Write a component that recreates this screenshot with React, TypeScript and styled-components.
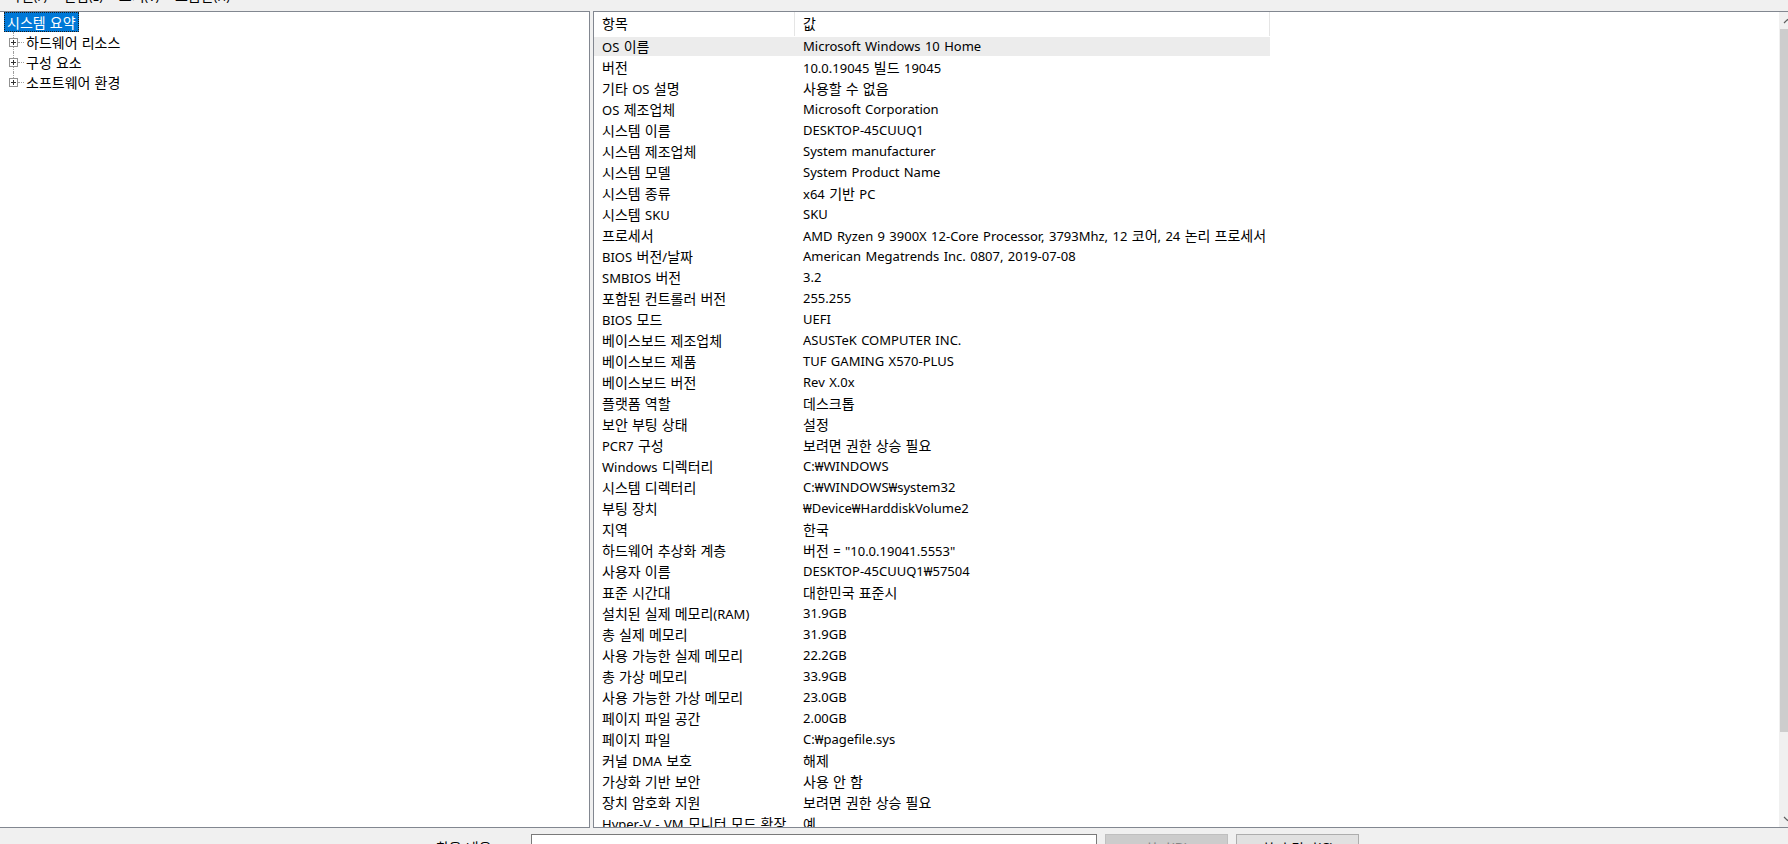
import React from 'react';
import styled, { createGlobalStyle } from 'styled-components';

const GlobalStyle = createGlobalStyle`
  html, body {
    margin: 0;
    padding: 0;
    overflow: hidden;
    background: #f0f0f0;
  }
  * {
    box-sizing: border-box;
  }
`;

const uiFont = `"Noto Sans", "Noto Sans CJK KR", sans-serif`;

const Viewport = styled.div`
  width: 1788px;
  height: 844px;
  overflow: hidden;
  background: #f0f0f0;
  font-family: ${uiFont};
  font-size: 13px;
  word-spacing: 1px;
  color: #000;
`;

// the window is a little wider than the screen, so the scrollbar is clipped
const Window = styled.div`
  width: 1796px;
  height: 844px;
  display: flex;
  flex-direction: column;
`;

// Hangul runs are set a touch larger than the Latin text around them
const Hangul = styled.span`
  font-family: "Noto Sans CJK KR", sans-serif;
  font-size: 14px;
`;

const hangulRun = /([\u3131-\u318E\uAC00-\uD7A3]+(?:\s+[\u3131-\u318E\uAC00-\uD7A3]+)*)/;

const T = ({ children }: { children: string }) => (
  <>
    {children.split(hangulRun).map((part, i) =>
      i % 2 === 1 ? <Hangul key={i}>{part}</Hangul> : part
    )}
  </>
);

const MenuBar = styled.div`
  height: 11px;
  flex-shrink: 0;
  display: flex;
  overflow: hidden;
`;

const MenuItem = styled.span`
  padding: 0 8px;
  margin-top: -12px;
  line-height: 15px;
  font-size: 12px;
  white-space: nowrap;
`;

const Main = styled.div`
  flex: 1;
  min-height: 0;
  display: flex;
  gap: 3px;
`;

const TreePane = styled.div`
  width: 590px;
  flex-shrink: 0;
  background: #fff;
  border: 1px solid #828790;
  border-left: none;
`;

const TreeRow = styled.div`
  height: 20px;
  display: flex;
  align-items: center;
`;

const RootLabel = styled.span`
  margin-left: 4px;
  height: 20px;
  padding: 0 2px;
  display: flex;
  align-items: center;
  background: #0078d7;
  color: #fff;
  border: 1px dotted #1c1c1c;
  white-space: nowrap;
`;

const Gutter = styled.div<{ $last?: boolean }>`
  position: relative;
  width: 24px;
  height: 20px;
  flex-shrink: 0;
  display: flex;
  align-items: center;
  padding-left: 9px;

  &::before {
    content: '';
    position: absolute;
    left: 13px;
    top: 0;
    height: ${p => (p.$last ? '10px' : '20px')};
    border-left: 1px dotted #a0a0a0;
  }

  &::after {
    content: '';
    position: absolute;
    left: 18px;
    right: 0;
    top: 10px;
    border-top: 1px dotted #a0a0a0;
  }

  svg {
    position: relative;
    z-index: 1;
    display: block;
  }
`;

const NodeLabel = styled.span`
  padding: 0 2px 1px;
  white-space: nowrap;
`;

const ListPane = styled.div`
  flex: 1;
  min-width: 0;
  display: flex;
  background: #fff;
  border: 1px solid #828790;
  border-right: none;
`;

const ListArea = styled.div`
  flex: 1;
  min-width: 0;
  overflow: hidden;
`;

const HeaderRow = styled.div`
  display: grid;
  grid-template-columns: 201px 475px;
  height: 24px;
  align-items: center;
`;

const HeaderCell = styled.div`
  height: 24px;
  display: flex;
  align-items: center;
  padding: 0 0 2px 8px;
  border-right: 1px solid #e5e5e5;
  white-space: nowrap;
`;

const DataRow = styled.div<{ $selected?: boolean }>`
  display: grid;
  grid-template-columns: 201px 475px;
  height: 21px;
  width: 676px;
  align-items: center;
  background: ${p =>
    p.$selected ? 'linear-gradient(#fff 0 1px, #ececec 1px 20px, #fff 20px)' : 'transparent'};
`;

const Cell = styled.div`
  padding: 0 0 1px 8px;
  white-space: nowrap;
`;

const ScrollBar = styled.div`
  width: 17px;
  flex-shrink: 0;
  display: flex;
  flex-direction: column;
  background: #f0f0f0;
`;

const ArrowButton = styled.div`
  height: 17px;
  flex-shrink: 0;
  display: flex;
  align-items: center;
  justify-content: center;
`;

const Thumb = styled.div`
  height: 703px;
  margin: 0 1px;
  background: #cdcdcd;
  flex-shrink: 0;
`;

const Track = styled.div`
  flex: 1;
`;

const BottomBar = styled.div`
  height: 16px;
  flex-shrink: 0;
  display: flex;
  align-items: flex-start;
  padding-top: 6px;
  overflow: hidden;
`;

const FindLabel = styled.label`
  width: 515px;
  text-align: right;
  padding-top: 3px;
  white-space: nowrap;
`;

const FindInput = styled.div`
  width: 566px;
  height: 23px;
  margin-left: 16px;
  background: #fff;
  border: 1px solid #7a7a7a;
`;

const Button = styled.div<{ $disabled?: boolean }>`
  width: 123px;
  height: 23px;
  margin-left: 8px;
  display: flex;
  justify-content: center;
  padding-top: 3px;
  background: ${p => (p.$disabled ? '#cccccc' : '#e1e1e1')};
  border: 1px solid ${p => (p.$disabled ? '#bfbfbf' : '#adadad')};
  color: ${p => (p.$disabled ? '#838383' : '#000')};
  white-space: nowrap;
`;

const PlusBox = () => (
  <svg width="9" height="9" viewBox="0 0 9 9">
    <rect x="0.5" y="0.5" width="8" height="8" fill="#fff" stroke="#919191" />
    <path d="M2 4.5h5M4.5 2v5" stroke="#333" strokeWidth="1" />
  </svg>
);

const Chevron = ({ down }: { down?: boolean }) => (
  <svg width="9" height="6" viewBox="0 0 9 6">
    <path
      d={down ? 'M1 1l3.5 3.5L8 1' : 'M1 5l3.5-3.5L8 5'}
      fill="none"
      stroke="#606060"
      strokeWidth="1.2"
    />
  </svg>
);

const menus = ['파일(F)', '편집(E)', '보기(V)', '도움말(H)'];

const nodes = ['하드웨어 리소스', '구성 요소', '소프트웨어 환경'];

const W = '\u20A9';

const rows: [string, string][] = [
  ['OS 이름', 'Microsoft Windows 10 Home'],
  ['버전', '10.0.19045 빌드 19045'],
  ['기타 OS 설명', '사용할 수 없음'],
  ['OS 제조업체', 'Microsoft Corporation'],
  ['시스템 이름', 'DESKTOP-45CUUQ1'],
  ['시스템 제조업체', 'System manufacturer'],
  ['시스템 모델', 'System Product Name'],
  ['시스템 종류', 'x64 기반 PC'],
  ['시스템 SKU', 'SKU'],
  ['프로세서', 'AMD Ryzen 9 3900X 12-Core Processor, 3793Mhz, 12 코어, 24 논리 프로세서'],
  ['BIOS 버전/날짜', 'American Megatrends Inc. 0807, 2019-07-08'],
  ['SMBIOS 버전', '3.2'],
  ['포함된 컨트롤러 버전', '255.255'],
  ['BIOS 모드', 'UEFI'],
  ['베이스보드 제조업체', 'ASUSTeK COMPUTER INC.'],
  ['베이스보드 제품', 'TUF GAMING X570-PLUS'],
  ['베이스보드 버전', 'Rev X.0x'],
  ['플랫폼 역할', '데스크톱'],
  ['보안 부팅 상태', '설정'],
  ['PCR7 구성', '보려면 권한 상승 필요'],
  ['Windows 디렉터리', `C:${W}WINDOWS`],
  ['시스템 디렉터리', `C:${W}WINDOWS${W}system32`],
  ['부팅 장치', `${W}Device${W}HarddiskVolume2`],
  ['지역', '한국'],
  ['하드웨어 추상화 계층', '버전 = "10.0.19041.5553"'],
  ['사용자 이름', `DESKTOP-45CUUQ1${W}57504`],
  ['표준 시간대', '대한민국 표준시'],
  ['설치된 실제 메모리(RAM)', '31.9GB'],
  ['총 실제 메모리', '31.9GB'],
  ['사용 가능한 실제 메모리', '22.2GB'],
  ['총 가상 메모리', '33.9GB'],
  ['사용 가능한 가상 메모리', '23.0GB'],
  ['페이지 파일 공간', '2.00GB'],
  ['페이지 파일', `C:${W}pagefile.sys`],
  ['커널 DMA 보호', '해제'],
  ['가상화 기반 보안', '사용 안 함'],
  ['장치 암호화 지원', '보려면 권한 상승 필요'],
  ['Hyper-V - VM 모니터 모드 확장', '예'],
  ['Hyper-V - 2단계 주소 변환 확장', '예'],
];

const App: React.FC = () => {
  return (
    <Viewport>
      <GlobalStyle />
      <Window>
        <MenuBar>
          {menus.map(m => (
            <MenuItem key={m}>
              <T>{m}</T>
            </MenuItem>
          ))}
        </MenuBar>

        <Main>
          <TreePane>
            <TreeRow>
              <RootLabel>
                <T>시스템 요약</T>
              </RootLabel>
            </TreeRow>
            {nodes.map((n, i) => (
              <TreeRow key={n}>
                <Gutter $last={i === nodes.length - 1}>
                  <PlusBox />
                </Gutter>
                <NodeLabel>
                  <T>{n}</T>
                </NodeLabel>
              </TreeRow>
            ))}
          </TreePane>

          <ListPane>
            <ListArea>
              <HeaderRow>
                <HeaderCell>
                  <T>항목</T>
                </HeaderCell>
                <HeaderCell>
                  <T>값</T>
                </HeaderCell>
              </HeaderRow>
              {rows.map(([label, value], i) => (
                <DataRow key={label} $selected={i === 0}>
                  <Cell>
                    <T>{label}</T>
                  </Cell>
                  <Cell>
                    <T>{value}</T>
                  </Cell>
                </DataRow>
              ))}
            </ListArea>
            <ScrollBar>
              <ArrowButton>
                <Chevron />
              </ArrowButton>
              <Thumb />
              <Track />
              <ArrowButton>
                <Chevron down />
              </ArrowButton>
            </ScrollBar>
          </ListPane>
        </Main>

        <BottomBar>
          <FindLabel>
            <T>찾을 내용(W):</T>
          </FindLabel>
          <FindInput />
          <Button $disabled>
            <T>찾기(D)</T>
          </Button>
          <Button>
            <T>찾기 닫기(C)</T>
          </Button>
        </BottomBar>
      </Window>
    </Viewport>
  );
};

export default App;
